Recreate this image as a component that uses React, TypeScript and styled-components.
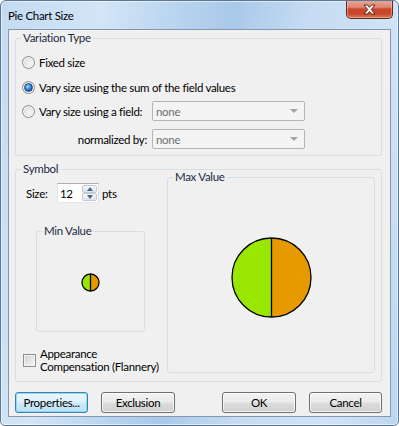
import React from "react";
import styled, { createGlobalStyle } from "styled-components";

const Global = createGlobalStyle`
  html, body { margin: 0; padding: 0; background: #ffffff; }
  body { font-family: Lato, "Liberation Sans", Arial, sans-serif; font-size: 11.5px; letter-spacing: -0.3px; color: #000; }
  * { box-sizing: border-box; }
`;

const Window = styled.div`
  width: 399px;
  height: 426px;
  border: 1px solid #5a7796;
  border-radius: 6px 6px 5px 5px;
  background: linear-gradient(100deg, #c3dbf2 0%, #d3e5f7 22%, #b5d2ee 40%, #a9c9ea 50%, #c6dcf2 66%, #d0e3f6 85%, #bed6ef 100%);
  box-shadow: inset 0 0 0 1px rgba(255, 255, 255, 0.55);
  display: flex;
  flex-direction: column;
  overflow: hidden;
`;

const TitleBar = styled.div`
  height: 28px;
  display: flex;
  align-items: flex-start;
  padding-left: 7px;
  padding-right: 5px;
  flex: none;
`;

const Title = styled.div`
  flex: 1;
  line-height: 14px;
  padding-top: 8px;
  color: #000;
`;

const CloseButton = styled.div`
  width: 47px;
  height: 19px;
  margin-top: -1px;
  border: 1px solid #5b2a1f;
  border-top: none;
  border-radius: 0 0 5px 5px;
  background: linear-gradient(180deg, #e9a899 0%, #dd8672 40%, #c8472c 50%, #c9462b 75%, #d97a55 100%);
  box-shadow: inset 0 0 0 1px rgba(255, 210, 200, 0.45);
  display: flex;
  align-items: center;
  justify-content: center;
  padding-top: 1px;
`;

const Body = styled.div`
  flex: 1;
  display: flex;
  padding: 0 7px 8px 7px;
`;

const Client = styled.div`
  flex: 1;
  background: #f0f0f0;
  border: 1px solid #8497ad;
  padding: 1px 8px 0 6px;
  display: flex;
  flex-direction: column;
`;

const Group = styled.fieldset<{ $w?: number; $h?: number }>`
  margin: 0;
  padding: 0;
  border: 1px solid #d5dfe5;
  border-radius: 3px;
  min-width: 0;
  ${(p) => (p.$w ? `width: ${p.$w}px; flex: none;` : "")}
  ${(p) => (p.$h ? `height: ${p.$h}px;` : "")}
`;

const Caption = styled.legend`
  margin-left: 5px;
  padding: 0 2px;
  line-height: 14px;
  color: #1b2a45;
`;

const VariationBody = styled.div`
  display: flex;
  flex-direction: column;
  padding: 7px 0 6px 6px;
`;

const VRow = styled.div<{ $mt?: number }>`
  display: flex;
  align-items: center;
  height: 20px;
  margin-top: ${(p) => p.$mt ?? 0}px;
`;

const OptionLabel = styled.label<{ $w?: number }>`
  display: flex;
  align-items: center;
  gap: 4px;
  white-space: nowrap;
  ${(p) => (p.$w ? `width: ${p.$w}px; flex: none;` : "")}
`;

const Radio = styled.span<{ $checked?: boolean }>`
  width: 13px;
  height: 13px;
  flex: none;
  border-radius: 50%;
  border: 1px solid #8a8b8c;
  background: radial-gradient(circle at 60% 60%, #f6f6f6 0%, #e3e3e3 55%, #c9c9c9 100%);
  box-shadow: inset 0 0 0 1px rgba(255, 255, 255, 0.7);
  display: flex;
  align-items: center;
  justify-content: center;
  &::after {
    content: "";
    display: ${(p) => (p.$checked ? "block" : "none")};
    width: 7px;
    height: 7px;
    border-radius: 50%;
    background: radial-gradient(circle at 38% 35%, #a6dcfb 0%, #3a8fdc 40%, #114a9a 85%);
    border: 1px solid #19477f;
  }
`;

const FieldLabel = styled.span`
  width: 130px;
  flex: none;
  text-align: right;
  padding-right: 5px;
`;

const Combo = styled.div`
  width: 153px;
  height: 20px;
  border: 1px solid #b0b5b8;
  border-radius: 2px;
  background: #f4f4f4;
  color: #6d6d6d;
  display: flex;
  align-items: center;
  padding-left: 3px;
`;

const ComboText = styled.span`
  flex: 1;
`;

const ComboArrow = styled.span`
  width: 0;
  height: 0;
  border-left: 4px solid transparent;
  border-right: 4px solid transparent;
  border-top: 4px solid #a3a3a3;
  margin-right: 6px;
`;

const SymbolGroup = styled(Group)`
  margin-top: 6px;
`;

const SymbolBody = styled.div`
  display: flex;
  align-items: flex-start;
  padding: 0 6px 8px 0;
`;

const LeftCol = styled.div`
  width: 151px;
  flex: none;
  display: flex;
  flex-direction: column;
`;

const RightCol = styled.div`
  margin-top: -6px;
  display: flex;
`;

const SizeRow = styled.div`
  display: flex;
  align-items: center;
  margin: 7px 0 0 10px;
  height: 20px;
`;

const SizeLabel = styled.span`
  width: 31px;
`;

const SpinBox = styled.div`
  width: 42px;
  height: 20px;
  border: 1px solid #abadb3;
  border-bottom-color: #e3e9ef;
  border-right-color: #dbdfe6;
  border-left-color: #e2e3ea;
  background: #fff;
  display: flex;
  align-items: stretch;
  padding-left: 2px;
`;

const SpinText = styled.span`
  flex: 1;
  display: flex;
  align-items: center;
  color: #000;
`;

const SpinButtons = styled.div`
  width: 16px;
  display: flex;
  flex-direction: column;
  padding: 1px 1px 1px 0;
`;

const SpinButton = styled.div<{ $up?: boolean }>`
  flex: 1;
  border: 1px solid #c2c9d3;
  border-radius: 2px;
  background: linear-gradient(180deg, #f7f9fb 0%, #e9eef3 50%, #dde4ec 100%);
  display: flex;
  align-items: center;
  justify-content: center;
  &::after {
    content: "";
    width: 0;
    height: 0;
    border-left: 3.5px solid transparent;
    border-right: 3.5px solid transparent;
    ${(p) => (p.$up ? "border-bottom: 4px solid #4e6488;" : "border-top: 4px solid #4e6488;")}
  }
`;

const Unit = styled.span`
  margin-left: 3px;
`;

const MinGroup = styled(Group)`
  margin: 21px 0 0 20px;
`;

const PieArea = styled.div<{ $h: number }>`
  height: ${(p) => p.$h}px;
  display: flex;
  align-items: center;
  justify-content: center;
`;

const CheckRow = styled.label`
  display: flex;
  align-items: center;
  gap: 4px;
  margin: 15px 0 0 7px;
  line-height: 13px;
  white-space: nowrap;
`;

const CheckBox = styled.span`
  width: 13px;
  height: 13px;
  flex: none;
  border: 1px solid #8e8f8f;
  background: linear-gradient(135deg, #cbcfd4 0%, #e6e8ea 60%, #f7f7f7 100%);
  box-shadow: inset 0 0 0 1px #f4f4f4;
`;

const ButtonRow = styled.div`
  display: flex;
  margin-top: 10px;
  height: 21px;
`;

const Button = styled.div<{ $w: number; $primary?: boolean; $ml?: number }>`
  width: ${(p) => p.$w}px;
  height: 21px;
  margin-left: ${(p) => p.$ml ?? 0}px;
  border: 1px solid ${(p) => (p.$primary ? "#3c7fb1" : "#707070")};
  border-radius: 3px;
  background: ${(p) =>
    p.$primary
      ? "linear-gradient(180deg, #eaf6fd 0%, #e0f1fb 48%, #cfe8f7 52%, #bfe0f4 100%)"
      : "linear-gradient(180deg, #f2f2f2 0%, #ebebeb 48%, #dddddd 52%, #cfcfcf 100%)"};
  box-shadow: inset 0 0 0 1px ${(p) => (p.$primary ? "rgba(120, 215, 250, 0.8)" : "rgba(255,255,255,0.75)")};
  display: flex;
  align-items: center;
  justify-content: center;
  color: #000;
`;

const Spacer = styled.div`
  flex: 1;
`;

function Pie({ d }: { d: number }) {
  const size = d + 2;
  const c = size / 2;
  const r = d / 2;
  return (
    <svg width={size} height={size} viewBox={`0 0 ${size} ${size}`}>
      <path d={`M ${c} ${c - r} A ${r} ${r} 0 0 0 ${c} ${c + r} Z`} fill="#99e600" />
      <path d={`M ${c} ${c - r} A ${r} ${r} 0 0 1 ${c} ${c + r} Z`} fill="#e69a00" />
      <circle cx={c} cy={c} r={r} fill="none" stroke="#000" strokeWidth={1.3} />
      <line x1={c} y1={c - r} x2={c} y2={c + r} stroke="#000" strokeWidth={1.3} />
    </svg>
  );
}

function CloseIcon() {
  return (
    <svg width="13" height="11" viewBox="0 0 13 11">
      <path
        d="M1 1 L4.5 1 L6.5 3.4 L8.5 1 L12 1 L8.3 5.5 L12 10 L8.5 10 L6.5 7.6 L4.5 10 L1 10 L4.7 5.5 Z"
        fill="#ffffff"
        stroke="#5a2218"
        strokeWidth="1"
        strokeLinejoin="round"
      />
    </svg>
  );
}

export default function App() {
  return (
    <>
      <Global />
      <Window>
        <TitleBar>
          <Title>Pie Chart Size</Title>
          <CloseButton>
            <CloseIcon />
          </CloseButton>
        </TitleBar>
        <Body>
          <Client>
            <Group>
              <Caption>Variation Type</Caption>
              <VariationBody>
                <VRow>
                  <OptionLabel>
                    <Radio />
                    Fixed size
                  </OptionLabel>
                </VRow>
                <VRow $mt={5}>
                  <OptionLabel>
                    <Radio $checked />
                    Vary size using the sum of the field values
                  </OptionLabel>
                </VRow>
                <VRow $mt={4}>
                  <OptionLabel $w={130}>
                    <Radio />
                    Vary size using a field:
                  </OptionLabel>
                  <Combo>
                    <ComboText>none</ComboText>
                    <ComboArrow />
                  </Combo>
                </VRow>
                <VRow $mt={8}>
                  <FieldLabel>normalized by:</FieldLabel>
                  <Combo>
                    <ComboText>none</ComboText>
                    <ComboArrow />
                  </Combo>
                </VRow>
              </VariationBody>
            </Group>
            <SymbolGroup>
              <Caption>Symbol</Caption>
              <SymbolBody>
                <LeftCol>
                  <SizeRow>
                    <SizeLabel>Size:</SizeLabel>
                    <SpinBox>
                      <SpinText>12</SpinText>
                      <SpinButtons>
                        <SpinButton $up />
                        <SpinButton />
                      </SpinButtons>
                    </SpinBox>
                    <Unit>pts</Unit>
                  </SizeRow>
                  <MinGroup $w={109} $h={108}>
                    <Caption>Min Value</Caption>
                    <PieArea $h={89}>
                      <Pie d={17} />
                    </PieArea>
                  </MinGroup>
                  <CheckRow>
                    <CheckBox />
                    <span>
                      Appearance
                      <br />
                      Compensation (Flannery)
                    </span>
                  </CheckRow>
                </LeftCol>
                <RightCol>
                  <Group $w={208} $h={203}>
                    <Caption>Max Value</Caption>
                    <PieArea $h={186}>
                      <Pie d={79} />
                    </PieArea>
                  </Group>
                </RightCol>
              </SymbolBody>
            </SymbolGroup>
            <ButtonRow>
              <Button $w={73} $primary>Properties...</Button>
              <Button $w={74} $ml={13}>Exclusion</Button>
              <Spacer />
              <Button $w={74}>OK</Button>
              <Button $w={73} $ml={13}>Cancel</Button>
            </ButtonRow>
          </Client>
        </Body>
      </Window>
    </>
  );
}
